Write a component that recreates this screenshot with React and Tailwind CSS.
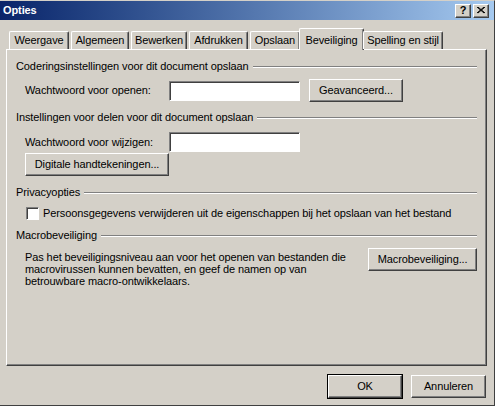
import React from 'react';

const raised =
  'bg-[#d4d0c8] border border-t-white border-l-white border-r-[#404040] border-b-[#404040] shadow-[inset_-1px_-1px_#808080]';
const sunken =
  'bg-white border border-t-[#808080] border-l-[#808080] border-r-white border-b-white shadow-[inset_1px_1px_#404040]';

function Btn({ children, className = '', def = false }) {
  return (
    <div className={`${def ? 'outline outline-1 outline-black' : ''} ${className}`}>
      <button className={`${raised} w-full h-full flex items-center justify-center text-black`}>
        {children}
      </button>
    </div>
  );
}

function Section({ title, children }) {
  return (
    <div>
      <div className="flex items-center gap-[4px] h-[13px]">
        <span className="whitespace-nowrap">{title}</span>
        <div className="flex-1 h-[2px] border-t border-t-[#808080] border-b border-b-white" />
      </div>
      {children}
    </div>
  );
}

const tabs = ['Weergave', 'Algemeen', 'Bewerken', 'Afdrukken', 'Opslaan', 'Beveiliging', 'Spelling en stijl'];
const tabWidths = {
  Weergave: 'w-[60px]',
  Algemeen: 'w-[58px]',
  Bewerken: 'w-[56px]',
  Afdrukken: 'w-[59px]',
  Opslaan: 'w-[50px]',
  Beveiliging: 'w-[65px]',
  'Spelling en stijl': 'w-[80px]',
};

export default function App() {
  return (
    <div
      className="w-[495px] h-[406px] bg-[#d4d0c8] overflow-hidden flex flex-col text-[11px] tracking-[-0.1px] text-black border-r border-r-[#404040] border-b border-b-[#404040] border-t border-t-[#d4d0c8]"
      style={{ fontFamily: '"Liberation Sans", Arial, sans-serif' }}
    >
      {/* title bar */}
      <div className="h-[19px] flex items-center justify-between pl-[3px] pr-[5px] bg-gradient-to-r from-[#0a246a] to-[#a6caf0]">
        <span className="text-white font-bold text-[11px]">Opties</span>
        <div className="flex gap-[2px]">
          <div className={`${raised} w-[16px] h-[14px] flex items-center justify-center font-bold text-[11px] leading-none`}>?</div>
          <div className={`${raised} w-[16px] h-[14px] flex items-center justify-center`}>
            <svg width="8" height="7" viewBox="0 0 8 7">
              <path d="M0 0L7 6M1 0L8 6M7 0L0 6M8 0L1 6" stroke="black" strokeWidth="1" />
            </svg>
          </div>
        </div>
      </div>

      {/* tabs */}
      <div className="flex items-end pl-[8px] mt-[9px] h-[20px] relative z-10">
        {tabs.map((t) => {
          const sel = t === 'Beveiliging';
          return (
            <div
              key={t}
              className={`${tabWidths[t]} shrink-0 flex justify-center bg-[#d4d0c8] border-t border-l border-t-white border-l-white border-r border-r-[#404040] rounded-t-[2px] shadow-[inset_-1px_0_#808080] ${
                sel ? 'h-[22px] -mx-[2px] items-start pt-[3px] -mb-px' : 'h-[18px] items-center mx-px'
              }`}
            >
              {t}
            </div>
          );
        })}
      </div>

      {/* panel */}
      <div className="ml-[6px] w-[481px] h-[317px] border border-t-white border-l-white border-r-[#404040] border-b-[#404040] shadow-[inset_-1px_-1px_#808080] pt-[10px] pl-[9px] pr-[9px] flex flex-col">
        <Section title="Coderingsinstellingen voor dit document opslaan">
          <div className="flex items-center mt-[6px] pl-[9px] h-[23px]">
            <span className="w-[144px]">Wachtwoord voor openen:</span>
            <div className={`${sunken} w-[131px] h-[20px]`} />
            <Btn className="ml-[9px] w-[94px] h-[23px]">Geavanceerd...</Btn>
          </div>
        </Section>

        <div className="mt-[9px]">
          <Section title="Instellingen voor delen voor dit document opslaan">
            <div className="flex items-center mt-[8px] pl-[9px] h-[20px]">
              <span className="w-[144px]">Wachtwoord voor wijzigen:</span>
              <div className={`${sunken} w-[131px] h-[20px]`} />
            </div>
            <Btn className="ml-[9px] mt-[1px] w-[144px] h-[23px]">Digitale handtekeningen...</Btn>
          </Section>
        </div>

        <div className="mt-[10px]">
          <Section title="Privacyopties">
            <div className="flex items-center mt-[8px] pl-[10px] h-[13px]">
              <div className={`${sunken} w-[13px] h-[13px]`} />
              <span className="ml-[4px]">
                Persoonsgegevens verwijderen uit de eigenschappen bij het opslaan van het bestand
              </span>
            </div>
          </Section>
        </div>

        <div className="mt-[9px]">
          <Section title="Macrobeveiliging">
            <div className="flex items-start mt-[9px] pl-[9px]">
              <p className="w-[344px] leading-[12px]">
                Pas het beveiligingsniveau aan voor het openen van bestanden die
                <br />
                macrovirussen kunnen bevatten, en geef de namen op van
                <br />
                betrouwbare macro-ontwikkelaars.
              </p>
              <Btn className="w-[109px] h-[23px] -mt-[3px]">Macrobeveiliging...</Btn>
            </div>
          </Section>
        </div>
      </div>

      {/* footer */}
      <div className="flex justify-end gap-[9px] mt-[9px] pr-[8px]">
        <Btn def className="w-[74px] h-[23px]">OK</Btn>
        <Btn className="w-[75px] h-[23px]">Annuleren</Btn>
      </div>
    </div>
  );
}
